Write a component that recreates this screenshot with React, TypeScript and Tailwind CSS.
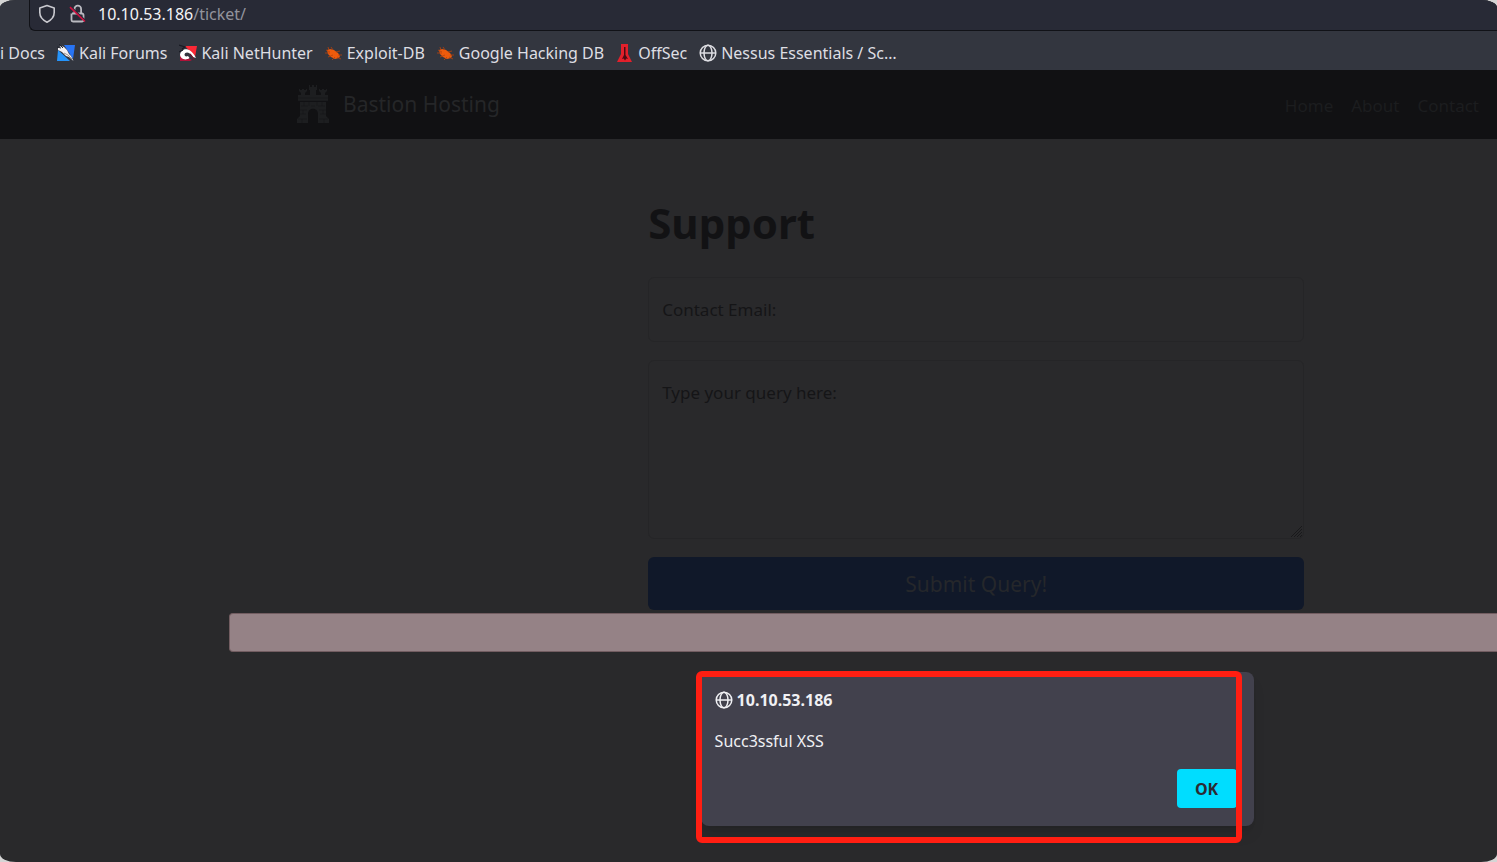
import React from "react";

const GlobeIcon = () => (
  <svg viewBox="0 0 18 18" className="size-[18px] shrink-0" fill="none" stroke="currentColor" strokeWidth="1.5" aria-hidden="true">
    <circle cx="9" cy="9" r="7.8" />
    <ellipse cx="9" cy="9" rx="4" ry="7.8" />
    <path d="M1.2 9h15.6" />
  </svg>
);

const ShieldIcon = () => (
  <svg viewBox="0 0 18 20" className="h-5 w-[18px] shrink-0" fill="none" stroke="#c9c9cf" strokeWidth="1.6" strokeLinejoin="round" aria-hidden="true">
    <path d="M9 1.5 16.200 4v4.600c0 4.300-3 7.600-7.200 9.600-4.200-2-7.200-5.300-7.200-9.600V4z" />
  </svg>
);

const InsecureIcon = () => (
  <svg viewBox="0 0 18 20" className="h-5 w-[18px] shrink-0" fill="none" aria-hidden="true">
    <path d="M6.500 9V5a3.300 3.300 0 0 1 6.600 0V9" stroke="#b9b9c0" strokeWidth="1.800" />
    <path d="M4 9.500h10a1.500 1.500 0 0 1 1.500 1.500v5a1.500 1.500 0 0 1-1.500 1.500H5A1.500 1.500 0 0 1 3.500 16V9.500" stroke="#b9b9c0" strokeWidth="1.800" />
    <path d="M3.500 3.200 18.500 17.500" stroke="#282a36" strokeWidth="1.500" />
    <path d="M2 3.200 17 17.500" stroke="#d01040" strokeWidth="1.600" />
  </svg>
);

const ForumsIcon = () => (
  <svg viewBox="0 0 18 18" className="size-[18px] shrink-0" aria-hidden="true">
    <path d="M7 1h11l-2 14z" fill="#2874f5" />
    <path d="M1 6l12 11H0z" fill="#2594fb" />
    <path d="M1 4 4 2l3 1 3 3 2 4 2 2 2.500 5-4.500-4-3-1-4-4-4-2z" fill="#f3f1f3" />
    <path d="m2 0 4 4M0 3l4 1" stroke="#20252e" strokeWidth="1" />
    <path d="m7 9 4 2 4 4" stroke="#8c8078" strokeWidth=".8" fill="none" />
  </svg>
);

const NetHunterIcon = () => (
  <svg viewBox="0 0 18 18" className="size-[18px] shrink-0" aria-hidden="true">
    <path d="M6 2h12l-2 11z" fill="#fb2835" />
    <path d="M1 10l12 6-2 1H1z" fill="#b01238" />
    <path d="M1 11C2 4 11 2 17 14l-3-1C10 7 6 8 5.500 10.500c0 2 2 2.500 3.500 1.500l1.500 2c-4 3-9 1-9.500-3z" fill="#fff" />
    <path d="m0 1 6 2-3 2M4 6 0 8" stroke="#191b24" strokeWidth="1.200" fill="none" />
    <path d="M11 10c2 2 3 4 4 6" stroke="#6d1731" strokeWidth="1.200" fill="none" />
  </svg>
);

const BugIcon = () => (
  <svg viewBox="0 0 18 18" className="size-[18px] shrink-0" fill="#ee5b0c" aria-hidden="true">
    <path d="m2 6 3-1 4 1 4 3 2 3-1 2-4 1-4-2-3-3z" />
    <path d="m4 6-1-3M8 6 6 3M1 6l4 2M0 9h5M3 13l5-2M7 16l3-3M11 8l4-1M13 11l4 0M12 13l4 2" stroke="#b8420d" strokeWidth=".8" />
  </svg>
);

const OffSecIcon = () => (
  <svg viewBox="0 0 18 20" className="h-5 w-[18px] shrink-0" aria-hidden="true">
    <path d="M5 1h7v10l4 8H1l4-8z" fill="#e2202b" />
    <path d="M8 4h1.500v8l2.500 4-2-.500v2l-1-1.500-1 1.500v-2l-2 .500 2-4z" fill="#4b0b13" />
  </svg>
);

const BastionLogo = () => (
  <svg viewBox="0 0 36 40" className="h-10 w-9 shrink-0" aria-hidden="true">
    <g fill="#1d1e20">
      <path d="M4 5h1v1h2V5h2v1h2V5h1v2l-2 2v2H6V9L4 7zM14 1h1v2h2V1h2v2h2V1h1v5h-1v5h-6V6h-1zM24 5h1v1h2V5h2v1h2V5h1v2l-2 2v2h-4V9l-2-2z" />
      <path d="M3 11h30v6H3zM5 18h26v14l3 3v4H23V30c0-7-10-7-10 0v9H2v-4l3-3z" />
    </g>
    <path d="M3 14h30M3 17h30M6 22h7m3 0h4m3 0h7M5 26h7m12 0h7M5 30h6m14 0h6M3 35h9m12 0h9M9 18v4m5-4v4m8-4v4m5-4v4M8 26v4m20-4v4M7 35v4m22-4v4" stroke="#151517" strokeWidth=".6" />
  </svg>
);

const bookmarks = [
  { label: "Kali Forums", icon: <ForumsIcon /> },
  { label: "Kali NetHunter", icon: <NetHunterIcon /> },
  { label: "Exploit-DB", icon: <BugIcon /> },
  { label: "Google Hacking DB", icon: <BugIcon /> },
  { label: "OffSec", icon: <OffSecIcon /> },
  { label: "Nessus Essentials / Sc…", icon: <GlobeIcon /> },
];

const BrowserChrome = () => (
  <header className="bg-[#33363f] text-[#dedee3]">
    <div className="ml-[29px] flex h-[31px] items-center gap-3 rounded-bl-md border-b border-l border-[#111217] bg-[#282a36] pb-0.5 pl-2">
      <ShieldIcon />
      <InsecureIcon />
      <div className="text-base leading-5 text-[#f4f4f6]">
        10.10.53.186<span className="text-[#92939d]">/ticket/</span>
      </div>
    </div>
    <nav aria-label="Bookmarks" className="flex h-[39px] items-center gap-3 overflow-hidden whitespace-nowrap pb-1 pt-2 text-base leading-6">
      <a href="#docs">i Docs</a>
      {bookmarks.map((item) => (
        <a key={item.label} href="#bookmark" className="flex items-center gap-1">
          {item.icon}
          {item.label}
        </a>
      ))}
    </nav>
  </header>
);

const SiteNav = () => (
  <nav aria-label="Site" className="flex h-[69px] items-center justify-between bg-[#111113] pb-0.5 pl-[295px] pr-[18px] text-[#1c1d1f]">
    <a href="#home" className="flex items-center gap-3 text-[21px] leading-8 text-[#252628]">
      <BastionLogo />
      Bastion Hosting
    </a>
    <div className="flex gap-[18px] pt-1 text-[17px] leading-6">
      <a href="#home">Home</a>
      <a href="#about">About</a>
      <a href="#contact">Contact</a>
    </div>
  </nav>
);

const SupportForm = () => (
  <form className="ml-[43.3%] flex max-w-[656px] flex-col pt-[54px]" onSubmit={(e) => e.preventDefault()}>
    <h1 className="text-[42px] font-bold leading-[60px] text-[#121214]">Support</h1>
    <input
      type="email"
      aria-label="Contact Email"
      placeholder="Contact Email:"
      className="mt-6 h-[65px] rounded-md border border-[#252527] bg-transparent px-[13px] text-[17px] text-[#151517] placeholder:text-[#151517]"
    />
    <div className="relative mt-[18px] flex">
      <textarea
        aria-label="Query"
        placeholder="Type your query here:"
        className="h-[179px] w-full resize-none rounded-md border border-[#252527] bg-transparent px-[13px] py-5 text-[17px] leading-6 text-[#151517] placeholder:text-[#151517]"
      />
      <svg viewBox="0 0 12 12" className="absolute bottom-0.5 right-0.5 size-3" stroke="#19191b" strokeWidth="1" aria-hidden="true">
        <path d="M1 12 12 1M4 12l8-8M7 12l5-5M10 12l2-2" />
      </svg>
    </div>
    <button type="submit" className="mt-[18px] h-[53px] rounded-md bg-[#101829] pt-0.5 text-[21px] text-[#25272b]">
      Submit Query!
    </button>
  </form>
);

const AlertDialog = () => (
  <div role="alertdialog" aria-labelledby="alert-host" className="absolute left-[46.8%] top-[533px] h-[154px] w-[553px] rounded-lg bg-[#42414d] px-[14px] py-4 text-[#f0f0f4] shadow-lg">
    <div id="alert-host" className="flex items-center gap-1 text-base font-bold leading-6">
      <GlobeIcon />
      10.10.53.186
    </div>
    <p className="mt-[17px] text-base leading-6">Succ3ssful XSS</p>
    <div className="mt-4 flex justify-end pr-[3px]">
      <button type="button" className="h-[39px] w-[60px] rounded bg-[#00ddff] text-base font-bold text-[#2b2a33]">
        OK
      </button>
    </div>
    {/* Highlight drawn over the dialog */}
    <div className="pointer-events-none absolute -left-[5px] -top-px h-[172px] w-[546px] rounded-md border-[6px] border-[#ff1e12]" />
  </div>
);

const App = () => {
  return (
    <div className="min-h-screen bg-[#d5d5d5]">
      <div className="flex min-h-screen flex-col overflow-hidden rounded-[16px/8px] bg-[#29292b] font-['Noto_Sans',sans-serif]">
        <BrowserChrome />
        <SiteNav />
        <main className="relative flex-1">
          <SupportForm />
          <div className="ml-[229px] mt-[3px] h-[39px] rounded-l border border-r-0 border-[#725d61] bg-[#958286]" />
          <AlertDialog />
        </main>
      </div>
    </div>
  );
};

export default App;
